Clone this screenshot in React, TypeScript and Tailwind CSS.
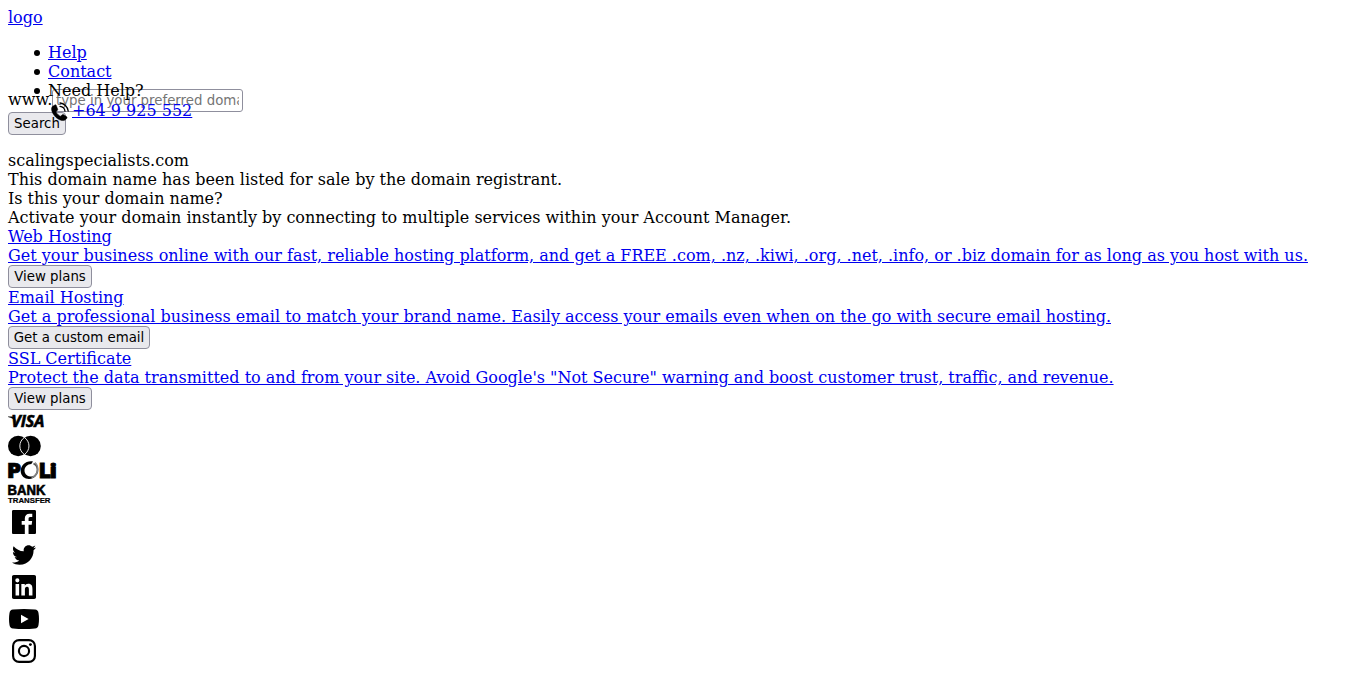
import type { ReactNode } from "react";

const link = "text-[#0000ee] underline";
const bullet = "relative before:absolute before:top-[7px] before:-left-[14px] before:h-[5.600px] before:w-[5.600px] before:rounded-full before:bg-black before:content-['']";

function Link({ children }: { children: ReactNode }) {
  return <a href="#" className={link}>{children}</a>;
}

function Button({ children, width }: { children: ReactNode; width: string }) {
  return (
    <button
      type="button"
      className={`block h-[23px] rounded-[4px] border border-[#8f8f9d] bg-[#e9e9ed] text-center font-['DejaVu_Sans',sans-serif] text-[13.333px] leading-[16px] whitespace-nowrap text-black ${width}`}
    >
      {children}
    </button>
  );
}

function Service({ title, text, action, width }: { title: string; text: string; action: string; width: string }) {
  return (
    <a href="#" className="block">
      <div className={link}>{title}</div>
      <div className={link}>{text}</div>
      <Button width={width}>{action}</Button>
    </a>
  );
}

const brandIcons = [
  {
    name: "facebook",
    path: "M22.676 0H1.324C.593 0 0 .593 0 1.324v21.352C0 23.408.593 24 1.324 24h11.494v-9.294H9.689v-3.621h3.129V8.41c0-3.099 1.894-4.785 4.659-4.785 1.325 0 2.464.097 2.796.141v3.24h-1.921c-1.5 0-1.792.721-1.792 1.771v2.311h3.584l-.465 3.63H16.56V24h6.115c.733 0 1.325-.592 1.325-1.324V1.324C24 .593 23.408 0 22.676 0",
  },
  {
    name: "twitter",
    path: "M23.954 4.569c-.885.389-1.83.654-2.825.775 1.014-.611 1.794-1.574 2.163-2.723-.951.555-2.005.959-3.127 1.184-.896-.959-2.173-1.559-3.591-1.559-2.717 0-4.92 2.203-4.92 4.917 0 .39.045.765.127 1.124C7.691 8.094 4.066 6.13 1.64 3.161c-.427.722-.666 1.561-.666 2.475 0 1.71.87 3.213 2.188 4.096-.807-.026-1.566-.248-2.228-.616v.061c0 2.385 1.693 4.374 3.946 4.827-.413.111-.849.171-1.296.171-.314 0-.615-.03-.916-.086.631 1.953 2.445 3.377 4.604 3.417-1.68 1.319-3.809 2.105-6.102 2.105-.39 0-.779-.023-1.17-.067 2.189 1.394 4.768 2.209 7.557 2.209 9.054 0 13.999-7.496 13.999-13.986 0-.209 0-.42-.015-.63.961-.689 1.8-1.56 2.46-2.548l-.047-.02z",
  },
  {
    name: "linkedin",
    path: "M20.447 20.452h-3.554v-5.569c0-1.328-.027-3.037-1.852-3.037-1.853 0-2.136 1.445-2.136 2.939v5.667H9.351V9h3.414v1.561h.046c.477-.9 1.637-1.85 3.37-1.85 3.601 0 4.267 2.37 4.267 5.455v6.286zM5.337 7.433a2.062 2.062 0 0 1-2.063-2.065 2.064 2.064 0 1 1 2.063 2.065zm1.782 13.019H3.555V9h3.564v11.452zM22.225 0H1.771C.792 0 0 .774 0 1.729v20.542C0 23.227.792 24 1.771 24h20.451C23.2 24 24 23.227 24 22.271V1.729C24 .774 23.2 0 22.222 0h.003z",
  },
];

export default function App() {
  return (
    <div className="min-h-[682px] bg-white p-2 font-['DejaVu_Serif',serif] text-[16px] leading-[19px] text-black">
      <header className="relative z-10 h-[81px]">
        <Link>logo</Link>
        <ul className="mt-4 ml-10 w-[160px]">
          <li className={bullet}><Link>Help</Link></li>
          <li className={bullet}><Link>Contact</Link></li>
          <li className={bullet}>
            Need Help?
            <div className="flex h-[22px]">
              <svg className="h-6 w-6 shrink-0" viewBox="0 0 24 24">
                <path d="M7.200 4.800L4.400 6.400C2.900 8 3.500 11.500 5.600 14.500C8 18.200 12 20.800 15.500 20.500C17 20.400 18.500 19 19 18C19.200 17.400 19 17 18.500 16.600L15.600 14.700C14.900 14.300 14.300 14.500 13.900 15L13 16C12.500 16.500 11.500 16 10.500 15C9.300 13.800 8.300 12.700 8.100 11.900C8 11.400 8.300 11.100 9 10.700C9.700 10.300 9.900 9.700 9.600 9L8.300 5.500C8.100 4.900 7.700 4.600 7.200 4.800z" stroke="black" strokeWidth="0.500" />
                <path d="M12 3C16 3.300 19.700 6.700 20.200 11M12 6.300C14.600 6.600 16.700 8.600 17 11.200" fill="none" stroke="black" strokeWidth="1.300" strokeLinecap="round" />
              </svg>
              <div className="pt-[1px] whitespace-nowrap"><Link>+64 9 925 552</Link></div>
            </div>
          </li>
        </ul>
      </header>

      <main>
        <form className="mb-4">
          <div className="flex h-[23px]">
            <span className="w-[44px] pt-px">www.</span>
            <input
              type="text"
              placeholder="type in your preferred domain"
              className="h-[23px] w-[191px] rounded-[3px] border border-[#8f8f9d] bg-white px-[3px] pb-px font-['DejaVu_Sans',sans-serif] text-[13.333px] placeholder:text-[#757575]"
            />
          </div>
          <Button width="w-[58px]">Search</Button>
        </form>
        <div>scalingspecialists.com</div>
        <div>This domain name has been listed for sale by the domain registrant.</div>
        <div>Is this your domain name?</div>
        <div>Activate your domain instantly by connecting to multiple services within your Account Manager.</div>
        <Service
          title="Web Hosting"
          text="Get your business online with our fast, reliable hosting platform, and get a FREE .com, .nz, .kiwi, .org, .net, .info, or .biz domain for as long as you host with us."
          action="View plans"
          width="w-[84px]"
        />
        <Service
          title="Email Hosting"
          text="Get a professional business email to match your brand name. Easily access your emails even when on the go with secure email hosting."
          action="Get a custom email"
          width="w-[142px]"
        />
        <Service
          title="SSL Certificate"
          text={'Protect the data transmitted to and from your site. Avoid Google\'s "Not Secure" warning and boost customer trust, traffic, and revenue.'}
          action="View plans"
          width="w-[84px]"
        />
      </main>

      <footer>
        <svg className="block h-6 w-12 overflow-visible" viewBox="0 0 48 24" fontFamily="Open Sans, sans-serif" fontWeight="700" fontStyle="italic">
          <path d="M0 6.600h5.200q1.500 0 1.700 1.300l1 4.500C6.500 9.600 3.500 7.500 0 7z" />
          <text x="3.200" y="17.400" fontSize="15.200" stroke="black" strokeWidth="0.600" textLength="33.300" lengthAdjust="spacingAndGlyphs">VISA</text>
        </svg>
        <svg className="block h-6 w-12" viewBox="0 0 48 24">
          <circle cx="10.200" cy="12" r="10.200" />
          <circle cx="22.600" cy="12" r="10.200" />
          <path d="M16.400 3.500a10.200 10.200 0 0 1 0 17a10.200 10.200 0 0 1 0-17z" fill="black" stroke="white" strokeWidth="0.900" />
        </svg>
        <svg className="block h-6 w-12 overflow-visible" viewBox="0 0 48 24" fontFamily="Open Sans, sans-serif" fontWeight="800">
          <text x="-1.200" y="20" fontSize="21" stroke="black" strokeWidth="0.700" textLength="14.500" lengthAdjust="spacingAndGlyphs">P</text>
          <path d="M25 3.500C18 2.300 12.500 7.500 12.700 13.500c.2 4.500 4 7.500 8.300 7.500 3 0 5.500-1.500 7-3.500-5 2.500-11.500.5-11.500-5 0-3.500 3-6.500 6.800-6.500z" />
          <path d="M25.500 5.500c5 2.500 5.500 9 .5 13" fill="none" stroke="#555" strokeWidth="1.800" />
          <path d="M27 4.500c4.500 4.200 3.500 12-3.500 15.500" fill="none" stroke="#888" strokeWidth="1.300" />
          <text x="30.400" y="20" fontSize="21" stroke="black" strokeWidth="0.800" textLength="12.500" lengthAdjust="spacingAndGlyphs">L</text>
          <text x="41.600" y="20" fontSize="20" stroke="black" strokeWidth="0.800" textLength="7.500" lengthAdjust="spacingAndGlyphs">i</text>
        </svg>
        <svg className="block h-6 w-12 overflow-visible" viewBox="0 0 48 24" fontFamily="Liberation Sans, sans-serif" fontWeight="700">
          <text x="-.6" y="12.800" fontSize="14" stroke="black" strokeWidth=".6" textLength="38" lengthAdjust="spacingAndGlyphs">BANK</text>
          <text x="0" y="20.900" fontSize="7.200" stroke="black" strokeWidth=".2" textLength="42.500" lengthAdjust="spacingAndGlyphs">TRANSFER</text>
        </svg>
        <div className="flex flex-col gap-2 pt-1 pl-1">
          {brandIcons.map(({ name, path }, i) => (
            <svg key={name} className={i === 1 ? "mt-px h-6 w-6" : "h-6 w-6"} viewBox="0 0 24 24">
              <path d={path} />
            </svg>
          ))}
          <svg className="-ml-[3px] h-6 w-[30px]" viewBox="0 0 30 24">
            <path d="M4 2.500Q15 1.500 26 2.500Q29 2.800 29.500 6Q30.500 12 29.500 18Q29 21.200 26 21.500Q15 22.500 4 21.500Q1 21.200.5 18Q-.5 12 .5 6Q1 2.800 4 2.500z" />
            <path d="M12 7.700v8.600l7.600-4.300z" fill="white" />
          </svg>
          <svg className="h-6 w-6" viewBox="0 0 24 24">
            <rect x="1.080" y="1.080" width="21.840" height="21.840" rx="6" fill="none" stroke="black" strokeWidth="2.160" />
            <circle cx="12" cy="12" r="5.080" fill="none" stroke="black" strokeWidth="2.160" />
            <circle cx="18.400" cy="5.600" r="1.440" />
          </svg>
        </div>
      </footer>
    </div>
  );
}
